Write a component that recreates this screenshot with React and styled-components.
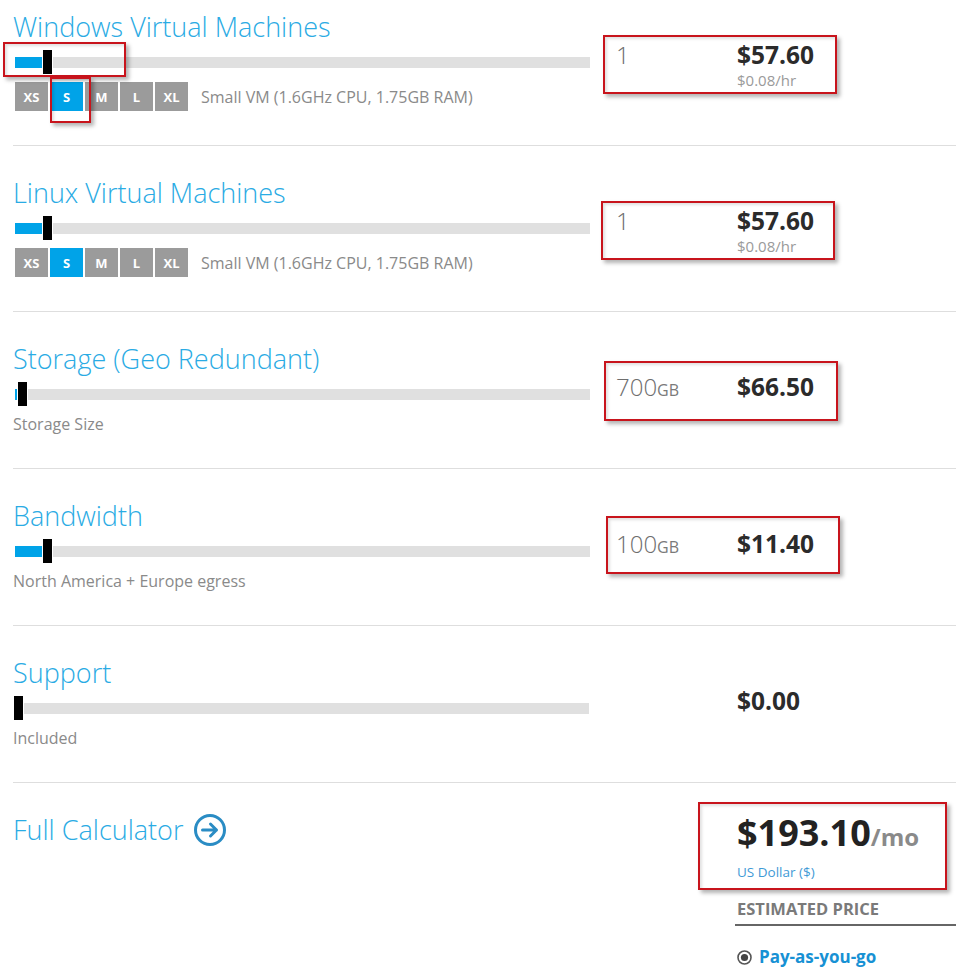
import React from "react";
import styled, { createGlobalStyle } from "styled-components";

const Global = createGlobalStyle`
  html, body { margin: 0; padding: 0; background: #fff; }
  body { font-family: "Open Sans", "Noto Sans", "Liberation Sans", sans-serif; }
  * { box-sizing: border-box; }
`;

const Page = styled.div`
  width: 963px;
  padding: 0 7px 0 13px;
`;

const Section = styled.section`
  position: relative;
  display: grid;
  grid-template-columns: 577px 1fr;
  padding: ${(p) => (p.$first ? "10px" : "30px")} 0 34px;
  border-bottom: ${(p) => (p.$last ? "none" : "1px solid #dedede")};
`;

const Left = styled.div`
  display: flex;
  flex-direction: column;
`;

const Title = styled.h2`
  margin: 0 0 6px;
  font-size: 27px;
  line-height: 34px;
  font-weight: 300;
  color: #2aabe4;
  display: flex;
  align-items: center;
  gap: 10px;
`;

const SliderRow = styled.div`
  display: flex;
  align-items: center;
  height: 24px;
  margin-left: ${(p) => (p.$fill > 0 ? "2px" : "1px")};
  width: 575px;
`;

const Fill = styled.div`
  height: 11px;
  background: #00a3e8;
  flex: none;
`;

const Thumb = styled.div`
  flex: none;
  width: 9px;
  height: 24px;
  background: #000;
  margin: 0 1px 0 ${(p) => (p.$fill > 0 ? "1px" : "0")};
`;

const Track = styled.div`
  flex: 1;
  height: 11px;
  background: #e0e0e0;
`;

const SizeRow = styled.div`
  display: flex;
  align-items: center;
  gap: 2px;
  margin: 8px 0 0 2px;
`;

const SizeBtn = styled.div`
  width: 33px;
  height: 29px;
  display: flex;
  align-items: center;
  justify-content: center;
  background: ${(p) => (p.$active ? "#00a3e8" : "#9b9b9b")};
  color: #fff;
  font-weight: 700;
  font-size: 13px;
`;

const SizeLabel = styled.span`
  margin-left: 11px;
  font-size: 16px;
  color: #8a8a8a;
`;

const Caption = styled.div`
  margin-top: 8px;
  font-size: 16px;
  line-height: 20px;
  color: #8a8a8a;
`;

const Right = styled.div`
  display: flex;
  align-items: flex-start;
  padding: 31px 0 0 26px;
`;

const Qty = styled.div`
  width: 121px;
  font-size: 24px;
  line-height: 28px;
  font-weight: 300;
  color: #6e6e6e;
`;

const Unit = styled.span`
  font-size: 16px;
  font-weight: 400;
  color: #7a7a7a;
`;

const PriceCol = styled.div`
  display: flex;
  flex-direction: column;
`;

const Price = styled.div`
  font-size: 24.5px;
  line-height: 28px;
  font-weight: 700;
  color: #2b2b2b;
`;

const Hourly = styled.div`
  margin-top: 2px;
  font-size: 15px;
  line-height: 18px;
  color: #9a9a9a;
`;

const Annot = styled.div`
  position: absolute;
  border: 2px solid #c8141c;
  box-shadow: 3px 3px 4px rgba(0, 0, 0, 0.3), inset 2px 2px 3px rgba(0, 0, 0, 0.12);
  pointer-events: none;
`;

const TotalBlock = styled.div`
  margin-left: 145px;
  display: flex;
  flex-direction: column;
`;

const TotalPrice = styled.div`
  padding-left: 2px;
  font-size: 36px;
  line-height: 40px;
  font-weight: 700;
  color: #222;
`;

const PerMonth = styled.span`
  font-size: 24px;
  color: #8a8a8a;
`;

const Currency = styled.div`
  padding-left: 2px;
  margin-top: 6px;
  font-size: 13.5px;
  line-height: 18px;
  color: #3f9ad6;
`;

const Estimated = styled.div`
  margin-top: 18px;
  padding: 0 0 5px 2px;
  font-size: 16.5px;
  line-height: 20px;
  font-weight: 700;
  color: #7a7a7a;
  border-bottom: 2px solid #666;
`;

const PayRow = styled.div`
  margin-top: 21px;
  padding-left: 2px;
  display: flex;
  align-items: center;
  gap: 7px;
  font-size: 17px;
  line-height: 20px;
  font-weight: 700;
  color: #1791d4;
`;

function Slider({ fill }) {
  return (
    <SliderRow $fill={fill}>
      {fill > 0 && <Fill style={{ width: fill }} />}
      <Thumb $fill={fill} />
      <Track />
    </SliderRow>
  );
}

function Sizes() {
  return (
    <SizeRow>
      {["XS", "S", "M", "L", "XL"].map((s) => (
        <SizeBtn key={s} $active={s === "S"}>
          {s}
        </SizeBtn>
      ))}
      <SizeLabel>Small VM (1.6GHz CPU, 1.75GB RAM)</SizeLabel>
    </SizeRow>
  );
}

const ArrowCircle = () => (
  <svg width="34" height="34" viewBox="0 0 34 34" fill="none">
    <circle cx="17" cy="17" r="14.5" stroke="#2a8cc4" strokeWidth="3" />
    <path d="M9.5 17H23.5M17.5 11L23.5 17L17.5 23" stroke="#2a8cc4" strokeWidth="3" strokeLinecap="round" strokeLinejoin="round" />
  </svg>
);

const Radio = () => (
  <svg width="15" height="15" viewBox="0 0 15 15">
    <circle cx="7.5" cy="7.5" r="6.5" fill="#fff" stroke="#555" strokeWidth="1.6" />
    <circle cx="7.5" cy="7.5" r="3.6" fill="#444" />
  </svg>
);

export default function App() {
  return (
    <>
      <Global />
      <Page>
        <Section $first>
          <Left>
            <Title>Windows Virtual Machines</Title>
            <Slider fill={27} />
            <Sizes />
          </Left>
          <Right>
            <Qty>1</Qty>
            <PriceCol>
              <Price>$57.60</Price>
              <Hourly>$0.08/hr</Hourly>
            </PriceCol>
          </Right>
          <Annot style={{ left: -10, top: 42, width: 123, height: 35 }} />
          <Annot style={{ left: 37, top: 77, width: 41, height: 46 }} />
          <Annot style={{ left: 590, top: 35, width: 234, height: 59 }} />
        </Section>

        <Section>
          <Left>
            <Title>Linux Virtual Machines</Title>
            <Slider fill={27} />
            <Sizes />
          </Left>
          <Right>
            <Qty>1</Qty>
            <PriceCol>
              <Price>$57.60</Price>
              <Hourly>$0.08/hr</Hourly>
            </PriceCol>
          </Right>
          <Annot style={{ left: 588, top: 55, width: 234, height: 59 }} />
        </Section>

        <Section>
          <Left>
            <Title>Storage (Geo Redundant)</Title>
            <Slider fill={2} />
            <Caption>Storage Size</Caption>
          </Left>
          <Right>
            <Qty>
              700<Unit>GB</Unit>
            </Qty>
            <PriceCol>
              <Price>$66.50</Price>
            </PriceCol>
          </Right>
          <Annot style={{ left: 591, top: 49, width: 234, height: 60 }} />
        </Section>

        <Section>
          <Left>
            <Title>Bandwidth</Title>
            <Slider fill={27} />
            <Caption>North America + Europe egress</Caption>
          </Left>
          <Right>
            <Qty>
              100<Unit>GB</Unit>
            </Qty>
            <PriceCol>
              <Price>$11.40</Price>
            </PriceCol>
          </Right>
          <Annot style={{ left: 593, top: 47, width: 234, height: 58 }} />
        </Section>

        <Section>
          <Left>
            <Title>Support</Title>
            <Slider fill={0} />
            <Caption>Included</Caption>
          </Left>
          <Right>
            <Qty />
            <PriceCol>
              <Price>$0.00</Price>
            </PriceCol>
          </Right>
        </Section>

        <Section $last>
          <Left>
            <Title>
              Full Calculator <ArrowCircle />
            </Title>
          </Left>
          <TotalBlock>
            <TotalPrice>
              $193.10<PerMonth>/mo</PerMonth>
            </TotalPrice>
            <Currency>US Dollar ($)</Currency>
            <Estimated>ESTIMATED PRICE</Estimated>
            <PayRow>
              <Radio />
              Pay-as-you-go
            </PayRow>
          </TotalBlock>
          <Annot style={{ left: 685, top: 19, width: 249, height: 88 }} />
        </Section>
      </Page>
    </>
  );
}
